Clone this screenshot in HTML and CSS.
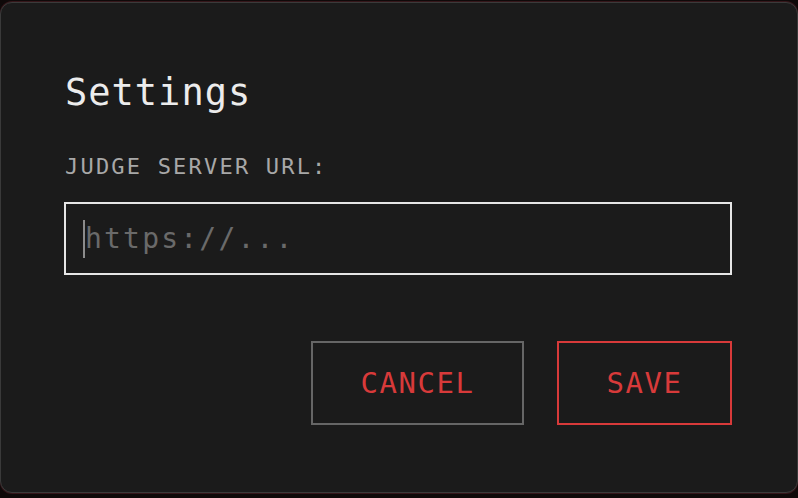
FILE: index.html
```html
<!DOCTYPE html>
<html lang="en">
<head>
  <meta charset="UTF-8" />
  <meta name="viewport" content="width=device-width, initial-scale=1.0" />
  <title>Settings</title>
  <link rel="stylesheet" href="styles.css">
</head>
<body>
  <div class="dialog">
    <h1 class="title">Settings</h1>
    <label class="label" for="server">JUDGE SERVER URL:</label>
    <div class="field">
      <span class="caret"></span>
      <input type="text" class="input" id="server" placeholder="https://..." />
    </div>
    <div class="actions">
      <button class="btn cancel">CANCEL</button>
      <button class="btn save">SAVE</button>
    </div>
  </div>
</body>
</html>
```

FILE: styles.css
```css
body {
  margin: 0;
  height: 498px;
  background-color: #0f0909;
  font-family: "DejaVu Sans Mono", monospace;
  overflow: hidden;
}

.dialog {
  box-sizing: border-box;
  margin-top: 2px;
  height: 491px;
  padding: 65px 65px 0 63px;
  background-color: #1b1b1b;
  border: 1px solid #3a3a3a;
  border-radius: 12px;
  box-shadow: 0 -1px 0 #35161a, 0 1px 0 #35161a;
  display: flex;
  flex-direction: column;
}

.title {
  margin: 0 0 0 1px;
  font-size: 37px;
  font-weight: normal;
  line-height: 50px;
  letter-spacing: 1px;
  color: #ececec;
}

.label {
  margin: 36px 0 0 1px;
  font-size: 22px;
  line-height: 26px;
  letter-spacing: 2.2px;
  color: #a8a8a8;
}

.field {
  position: relative;
  margin-top: 22px;
}

.input {
  box-sizing: border-box;
  width: 100%;
  height: 73px;
  padding: 0 18px 0 19px;
  background-color: #1b1b1b;
  border: 2px solid #e6e6e6;
  border-radius: 0;
  font-family: "DejaVu Sans Mono", monospace;
  font-size: 28px;
  letter-spacing: 2.2px;
  color: #e6e6e6;
  outline: none;
}

.input::placeholder {
  color: #6a6a6a;
}

.caret {
  position: absolute;
  left: 19px;
  top: 18px;
  width: 2px;
  height: 38px;
  background-color: #8c8c8c;
}

.actions {
  display: flex;
  justify-content: flex-end;
  gap: 33px;
  margin-top: 66px;
}

.btn {
  height: 84px;
  background-color: transparent;
  border: 2px solid #666;
  font-family: "DejaVu Sans Mono", monospace;
  font-size: 29px;
  letter-spacing: 1.5px;
  color: #d83a3a;
  cursor: pointer;
}

.cancel {
  width: 213px;
}

.save {
  width: 175px;
  border-color: #d83a3a;
}
```
